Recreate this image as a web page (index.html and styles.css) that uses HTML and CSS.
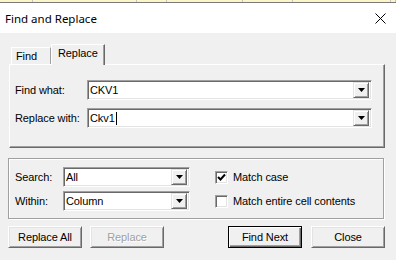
FILE: index.html
```html
<!DOCTYPE html>
<html>
<head>
	<title>Find and Replace</title>
	<meta http-equiv="Content-Type" content="text/html; charset=UTF-8">
	<link rel="stylesheet" href="styles.css">
</head>
<body>
	<div class="sheet">
		<span></span><span></span><span></span><span></span><span></span><span></span><span></span>
	</div>
	<div class="titlebar">
		<span class="title">Find and Replace</span>
		<svg class="close" width="11" height="11" viewBox="0 0 11 11">
			<path d="M0.5 0.5 L10.5 10.5 M10.5 0.5 L0.5 10.5" stroke="#000" stroke-width="1" fill="none"/>
		</svg>
	</div>
	<div class="dialog">
		<div class="tabs">
			<div class="tab">Find</div>
			<div class="tab tab-active">Replace</div>
		</div>
		<div class="tab-panel">
			<div class="field">
				<span class="field-label">Find what:</span>
				<div class="combo combo-wide">
					<span class="combo-text">CKV1</span>
					<span class="combo-btn"><svg width="7" height="4" viewBox="0 0 7 4"><path d="M0 0 H7 L3.5 4 Z" fill="#000"/></svg></span>
				</div>
			</div>
			<div class="field">
				<span class="field-label">Replace with:</span>
				<div class="combo combo-wide">
					<span class="combo-text">Ckv1<span class="caret"></span></span>
					<span class="combo-btn"><svg width="7" height="4" viewBox="0 0 7 4"><path d="M0 0 H7 L3.5 4 Z" fill="#000"/></svg></span>
				</div>
			</div>
		</div>
		<div class="options">
			<div class="option-row">
				<span class="opt-label">Search:</span>
				<div class="combo combo-small">
					<span class="combo-text">All</span>
					<span class="combo-btn"><svg width="7" height="4" viewBox="0 0 7 4"><path d="M0 0 H7 L3.5 4 Z" fill="#000"/></svg></span>
				</div>
				<span class="check">
					<svg width="9" height="9" viewBox="0 0 9 9"><path d="M1 4 L3.5 6.5 L8 1.5" stroke="#000" stroke-width="2" fill="none"/></svg>
				</span>
				<span class="check-label">Match case</span>
			</div>
			<div class="option-row">
				<span class="opt-label">Within:</span>
				<div class="combo combo-small">
					<span class="combo-text">Column</span>
					<span class="combo-btn"><svg width="7" height="4" viewBox="0 0 7 4"><path d="M0 0 H7 L3.5 4 Z" fill="#000"/></svg></span>
				</div>
				<span class="check"></span>
				<span class="check-label">Match entire cell contents</span>
			</div>
		</div>
		<div class="buttons">
			<button class="btn">Replace All</button>
			<button class="btn btn-disabled">Replace</button>
			<button class="btn btn-default">Find Next</button>
			<button class="btn btn-close">Close</button>
		</div>
	</div>
</body>
</html>
```

FILE: styles.css
```css
body {
	margin: 0;
	width: 396px;
	height: 260px;
	overflow: hidden;
	background: #f0f0f0;
	font-family: "Liberation Sans", Arial, sans-serif;
	font-size: 11px;
	letter-spacing: -0.1px;
	color: #000;
}
.sheet {
	display: grid;
	grid-template-columns: 33px 104px 30px 76px 50px 98px 5px;
	height: 2px;
	border-bottom: 1px solid #7a7a7a;
}
.sheet span {
	background: #fdf5c8;
	border-right: 1px solid #c4c4c4;
}
.titlebar {
	height: 30px;
	background: #fff;
	display: flex;
	align-items: center;
	justify-content: space-between;
	padding: 0 10px 0 5px;
}
.title {
	font-family: "Noto Sans", sans-serif;
	font-size: 11.5px;
	letter-spacing: 0;
}
.dialog {
	padding: 11px 11px 0 8px;
}
.tabs {
	display: flex;
	align-items: flex-end;
	height: 21px;
	margin-left: 3px;
	margin-bottom: -1px;
	position: relative;
	z-index: 1;
}
.tab {
	box-sizing: border-box;
	width: 40px;
	height: 17px;
	margin-bottom: 1px;
	padding: 2px 0 0 4px;
	line-height: 13px;
	border-top: 1px solid #fff;
	border-left: 1px solid #fff;
	border-right: 1px solid #a0a0a0;
}
.tab-active {
	width: 54px;
	height: 21px;
	margin-bottom: 0;
	padding: 2px 0 0 6px;
	background: #f0f0f0;
	border-right: 1px solid #696969;
	box-shadow: inset -1px 0 #a0a0a0;
}
.tab-panel {
	box-sizing: border-box;
	margin-left: 1px;
	height: 84px;
	padding: 15px 0 0 5px;
	border-top: 1px solid #fff;
	border-left: 1px solid #fff;
	border-right: 1px solid #696969;
	border-bottom: 1px solid #696969;
	box-shadow: inset -1px -1px #a0a0a0;
	display: flex;
	flex-direction: column;
	gap: 8px;
}
.field {
	display: flex;
	align-items: center;
}
.field-label {
	width: 72px;
}
.combo {
	box-sizing: border-box;
	height: 20px;
	padding: 2px;
	background: #fff;
	border: 1px solid;
	border-color: #a0a0a0 #fff #fff #a0a0a0;
	box-shadow: inset 1px 1px #696969, inset -1px -1px #e3e3e3;
	display: flex;
	align-items: center;
	justify-content: space-between;
}
.combo-wide {
	width: 285px;
}
.combo-small {
	width: 127px;
}
.combo-text {
	display: flex;
	align-items: center;
}
.caret {
	width: 1px;
	height: 13px;
	margin-left: 1px;
	background: #000;
}
.combo-btn {
	box-sizing: border-box;
	width: 16px;
	height: 16px;
	background: #f0f0f0;
	border: 1px solid;
	border-color: #e3e3e3 #696969 #696969 #e3e3e3;
	box-shadow: inset 1px 1px #fff, inset -1px -1px #a0a0a0;
	display: flex;
	align-items: center;
	justify-content: center;
}
.options {
	box-sizing: border-box;
	margin-top: 10px;
	width: 376px;
	height: 61px;
	padding: 8px 0 0 6px;
	border: 1px solid #a0a0a0;
	box-shadow: inset 1px 1px #fff, 1px 1px #fff;
	display: flex;
	flex-direction: column;
	gap: 4px;
}
.option-row {
	display: flex;
	align-items: center;
}
.opt-label {
	width: 48px;
}
.check {
	box-sizing: border-box;
	width: 13px;
	height: 13px;
	margin-left: 25px;
	margin-right: 5px;
	background: #fff;
	border: 1px solid;
	border-color: #a0a0a0 #fff #fff #a0a0a0;
	box-shadow: inset 1px 1px #696969, inset -1px -1px #e3e3e3;
	display: flex;
	align-items: center;
	justify-content: center;
}
.buttons {
	margin-top: 7px;
	display: flex;
	gap: 8px;
}
.btn {
	box-sizing: border-box;
	width: 74px;
	height: 22px;
	padding: 0;
	font-family: "Liberation Sans", Arial, sans-serif;
	font-size: 11px;
	letter-spacing: -0.1px;
	color: #000;
	background: #f0f0f0;
	border: 1px solid;
	border-color: #fff #696969 #696969 #fff;
	box-shadow: inset 1px 1px #e3e3e3, inset -1px -1px #a0a0a0;
}
.btn-disabled {
	color: #a0a0a0;
	text-shadow: 1px 1px #fff;
}
.btn-default {
	margin-left: auto;
	border-color: #000;
	box-shadow: inset 1px 1px #fff, inset -1px -1px #696969, inset -2px -2px #a0a0a0;
}
.btn-close {
	margin-left: 1px;
}
```
